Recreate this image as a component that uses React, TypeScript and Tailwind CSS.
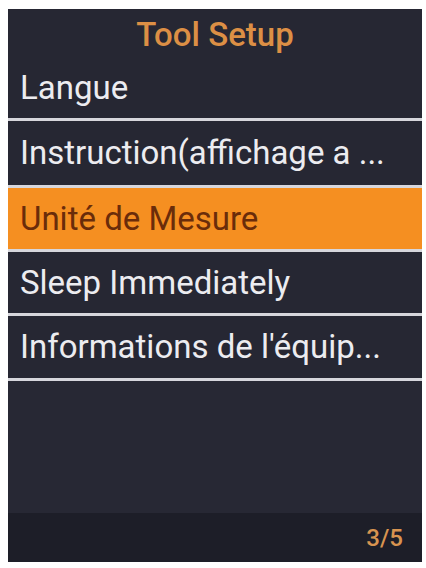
import React from "react";

const items = [
  { t: "Langue", h: "h-[60px]" },
  { t: "Instruction(affichage a ...", h: "h-[67px] border-t-[3px]" },
  { t: "Unité de Mesure", h: "h-[64px] border-t-[3px]" },
  { t: "Sleep Immediately", h: "h-[64px] border-t-[3px]" },
  { t: "Informations de l'équip...", h: "h-[65px] border-t-[3px]" },
];

export default function App() {
  return (
    <div className="w-[426px] h-[568px] bg-white pt-[9px] pl-[8px]" style={{ fontFamily: "Roboto, 'Noto Sans', sans-serif" }}>
      <div className="w-[414px] h-[553px] bg-[#262733] flex flex-col">
        <div className="h-[49px] flex items-center justify-center text-[33px] text-[#dc8f45] font-medium pt-[2px]">
          Tool Setup
        </div>
        {items.map((it, i) => {
          const sel = i === 2;
          return (
            <div
              key={it.t}
              className={
                it.h +
                " border-[#d6d6dc] " +
                (sel ? "bg-[#f58f21] text-[#6a2c0a] " : "bg-[#262733] text-[#ececf0] ") +
                "flex items-center pl-[12px] text-[33px] whitespace-nowrap overflow-hidden"
              }
            >
              {it.t}
            </div>
          );
        })}
        <div className="border-t-[3px] border-[#d6d6dc] flex-1 bg-[#272834]"></div>
        <div className="h-[49px] bg-[#1d1e28] flex items-center justify-end pr-[19px] text-[24px] text-[#d89450] font-medium">
          3/5
        </div>
      </div>
    </div>
  );
}
